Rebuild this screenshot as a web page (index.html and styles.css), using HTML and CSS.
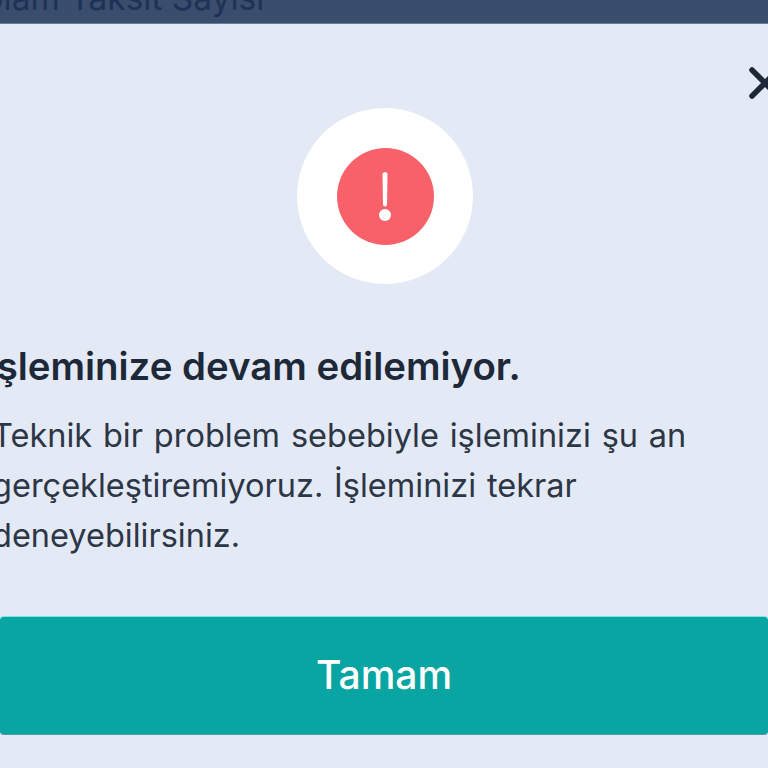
FILE: index.html

```html
<!DOCTYPE html>
<html lang="tr">
<head>
  <meta charset="UTF-8">
  <title>İşleminize devam edilemiyor</title>
  <link rel="stylesheet" href="styles.css">
</head>
<body>
  <div class="backdrop">
    <span class="backdrop-label">Toplam Taksit Sayısı</span>
  </div>
  <div class="sheet">
    <div class="close-row">
      <svg class="close-icon" width="36" height="36" viewBox="0 0 36 36">
        <path d="M5 5 L31 31 M31 5 L5 31" fill="none" stroke="#1d2838" stroke-width="5.5" stroke-linecap="round"/>
      </svg>
    </div>
    <div class="alert-ring">
      <div class="alert-dot">
        <svg width="16" height="50" viewBox="0 0 16 50">
          <path d="M5.5 2.5 Q8 -0.5 10.5 2.5 L10 34 Q8 37 6 34 Z" fill="#fff"/>
          <circle cx="8" cy="44" r="6" fill="#fff"/>
        </svg>
      </div>
    </div>
    <h1 class="title">İşleminize devam edilemiyor.</h1>
    <p class="message">Teknik bir problem sebebiyle işleminizi şu an gerçekleştiremiyoruz. İşleminizi tekrar deneyebilirsiniz.</p>
    <button class="ok-button">Tamam</button>
  </div>
</body>
</html>
```

FILE: styles.css

```css
html, body {
  margin: 0;
  height: 100%;
  overflow: hidden;
}
body {
  display: flex;
  flex-direction: column;
  font-family: "Inter", "Noto Sans", sans-serif;
  background-color: #e3e9f5;
}

.backdrop {
  height: 23px;
  background-color: #3b4d6d;
  border-bottom: 1px solid #6b7a96;
  overflow: hidden;
  flex-shrink: 0;
}
.backdrop-label {
  display: block;
  margin: -24px 0 0 -56px;
  font-size: 33.5px;
  line-height: 44px;
  color: #1e3156;
  white-space: nowrap;
}

.sheet {
  flex: 1;
  display: flex;
  flex-direction: column;
  padding-top: 41px;
}

.close-row {
  display: flex;
  justify-content: flex-end;
  height: 43px;
  margin-right: -15px;
}
.close-icon {
  display: block;
}

.alert-ring {
  width: 176px;
  height: 176px;
  margin-left: 297px;
  border-radius: 50%;
  background-color: #fff;
  display: flex;
  align-items: center;
  justify-content: center;
}
.alert-dot {
  width: 97px;
  height: 97px;
  border-radius: 50%;
  background-color: #f8616a;
  display: flex;
  align-items: center;
  justify-content: center;
}

.title {
  margin: 59px 0 0 -14px;
  font-size: 38.4px;
  line-height: 46px;
  font-weight: 600;
  color: #1d2838;
  white-space: nowrap;
}

.message {
  margin: 22px 0 0 -8px;
  width: 730px;
  font-size: 32.5px;
  line-height: 50px;
  word-spacing: 1.7px;
  color: #2c3645;
}

.ok-button {
  display: block;
  width: 100%;
  height: 117px;
  margin-top: 56px;
  padding-bottom: 4px;
  border: 0;
  border-radius: 4px;
  box-shadow: 0 1px 0 #4f9ca0, 0 -1px 0 #7fe3e0;
  background-color: #09a5a2;
  color: #fff;
  font-family: inherit;
  font-size: 39px;
  font-weight: 550;
}
```
